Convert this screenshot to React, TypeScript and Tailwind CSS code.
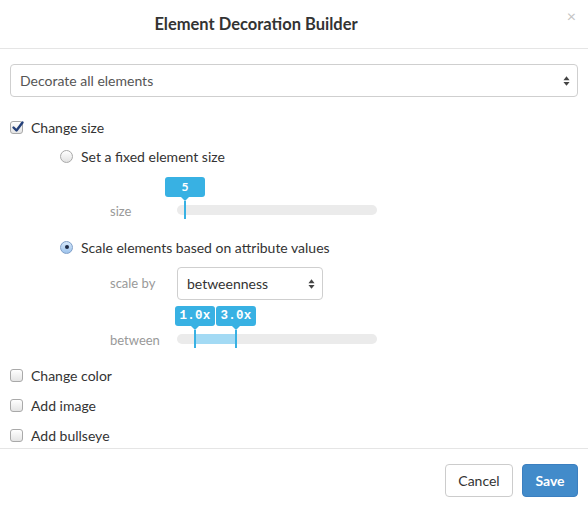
import React from "react";

const font = { fontFamily: "Lato, 'Liberation Sans', sans-serif" };

function CheckBox({ checked }: { checked?: boolean }) {
  return (
    <span className="relative flex h-[13px] w-[13px] shrink-0 items-center justify-center rounded-[3px] border border-[#a9a9a9] bg-gradient-to-b from-white to-[#e4e4e4]">
      {checked && (
        <svg viewBox="0 0 14 14" className="absolute -top-[2px] left-[0px] h-[14px] w-[14px]">
          <path d="M2.5 7.5 L5.5 10.5 L11.5 2.5" fill="none" stroke="#24407a" strokeWidth="2.4" strokeLinecap="round" strokeLinejoin="round" />
        </svg>
      )}
    </span>
  );
}

function Radio({ checked }: { checked?: boolean }) {
  return (
    <span
      className={`flex h-[13px] w-[13px] shrink-0 items-center justify-center rounded-full border ${
        checked
          ? "border-[#7f9fc8] bg-gradient-to-b from-[#d6e8fa] to-[#9dc3ec]"
          : "border-[#a9a9a9] bg-gradient-to-b from-white to-[#e2e2e2]"
      }`}
    >
      {checked && <span className="h-[4px] w-[4px] rounded-full bg-[#1d2a44]" />}
    </span>
  );
}

function Arrows() {
  return (
    <svg viewBox="0 0 8 12" className="h-[12px] w-[7px]">
      <path d="M4 0.5 L7.5 5 L0.5 5 Z" fill="#444" />
      <path d="M4 11.5 L7.5 7 L0.5 7 Z" fill="#444" />
    </svg>
  );
}

function Bubble({ left, label, mono }: { left: number; label: string; mono?: boolean }) {
  return (
    <div className="absolute top-[2px] flex flex-col items-center" style={{ left: left - 20 }}>
      <div
        className={`flex h-[20px] w-[40px] items-center justify-center rounded-[3px] bg-[#38b1e3] font-bold text-white ${
          mono ? "text-[12.5px] tracking-[0.3px]" : "text-[12px]"
        }`}
        style={mono ? { fontFamily: "'Liberation Mono', monospace" } : undefined}
      >
        {label}
      </div>
      <div className="h-0 w-0 border-x-[4px] border-t-[4px] border-x-transparent border-t-[#38b1e3]" />
    </div>
  );
}

function Thumb({ left }: { left: number }) {
  return <div className="absolute top-[26px] h-[18px] w-[2px] bg-[#38b1e3]" style={{ left: left - 1 }} />;
}

function Row({ children, className = "" }: { children: React.ReactNode; className?: string }) {
  return <div className={`flex h-[20px] items-center gap-[8px] text-[14px] text-[#333] ${className}`}>{children}</div>;
}

export default function App() {
  return (
    <div className="h-[510px] w-[588px] bg-white" style={font}>
      {/* header */}
      <div className="relative flex h-[49px] items-center justify-center border-b border-[#e5e5e5] pr-[76px]">
        <h1 className="text-[16.5px] font-bold text-[#333]">Element Decoration Builder</h1>
        <span className="absolute right-[12px] top-[4px] text-[16px] text-[#c4c4c4]">×</span>
      </div>

      {/* body */}
      <div className="px-[10px]">
        <div className="mt-[15px] flex h-[33px] items-center justify-between rounded-[4px] border border-[#cfcfcf] pl-[9px] pr-[7px] text-[14px] text-[#555]">
          <span>Decorate all elements</span>
          <Arrows />
        </div>

        <Row className="mt-[20px]">
          <CheckBox checked />
          <span>Change size</span>
        </Row>

        <div className="pl-[50px]">
          <Row className="mt-[9px]">
            <Radio />
            <span>Set a fixed element size</span>
          </Row>

          <div className="mt-[9px] flex h-[44px] pl-[50px]">
            <span className="h-[44px] w-[67px] pt-[27px] text-[13px] leading-[18px] text-[#999]">size</span>
            <div className="relative h-[44px] w-[200px]">
              <div className="absolute top-[30px] h-[10px] w-full rounded-full bg-[#ebebeb]" />
              <Bubble left={8} label="5" />
              <Thumb left={8} />
            </div>
          </div>

          <Row className="mt-[18px]">
            <Radio checked />
            <span>Scale elements based on attribute values</span>
          </Row>

          <div className="mt-[10px] flex items-center pl-[50px]">
            <span className="w-[67px] text-[13px] text-[#999]">scale by</span>
            <div className="flex h-[33px] w-[146px] items-center justify-between rounded-[4px] border border-[#cfcfcf] pl-[9px] pr-[7px] text-[14px] text-[#333]">
              <span>betweenness</span>
              <Arrows />
            </div>
          </div>

          <div className="mt-[4px] flex h-[44px] pl-[50px]">
            <span className="h-[44px] w-[67px] pt-[27px] text-[13px] leading-[18px] text-[#999]">between</span>
            <div className="relative h-[44px] w-[200px]">
              <div className="absolute top-[30px] h-[10px] w-full rounded-full bg-[#ebebeb]" />
              <div className="absolute left-[18px] top-[30px] h-[10px] w-[41px] bg-[#a3daf4]" />
              <Bubble left={18} label="1.0x" mono />
              <Bubble left={59} label="3.0x" mono />
              <Thumb left={18} />
              <Thumb left={59} />
            </div>
          </div>
        </div>

        <Row className="mt-[17px]">
          <CheckBox />
          <span>Change color</span>
        </Row>
        <Row className="mt-[10px]">
          <CheckBox />
          <span>Add image</span>
        </Row>
        <Row className="mt-[10px]">
          <CheckBox />
          <span>Add bullseye</span>
        </Row>
      </div>

      {/* footer */}
      <div className="mt-[3px] flex justify-end gap-[9px] border-t border-[#e5e5e5] px-[10px] pt-[15px]">
        <button className="h-[33px] w-[68px] rounded-[4px] border border-[#ccc] bg-white text-[14px] text-[#333]">Cancel</button>
        <button className="h-[33px] w-[56px] rounded-[4px] border border-[#3b7fc0] bg-[#428bca] text-[14px] font-bold text-white">Save</button>
      </div>
    </div>
  );
}
